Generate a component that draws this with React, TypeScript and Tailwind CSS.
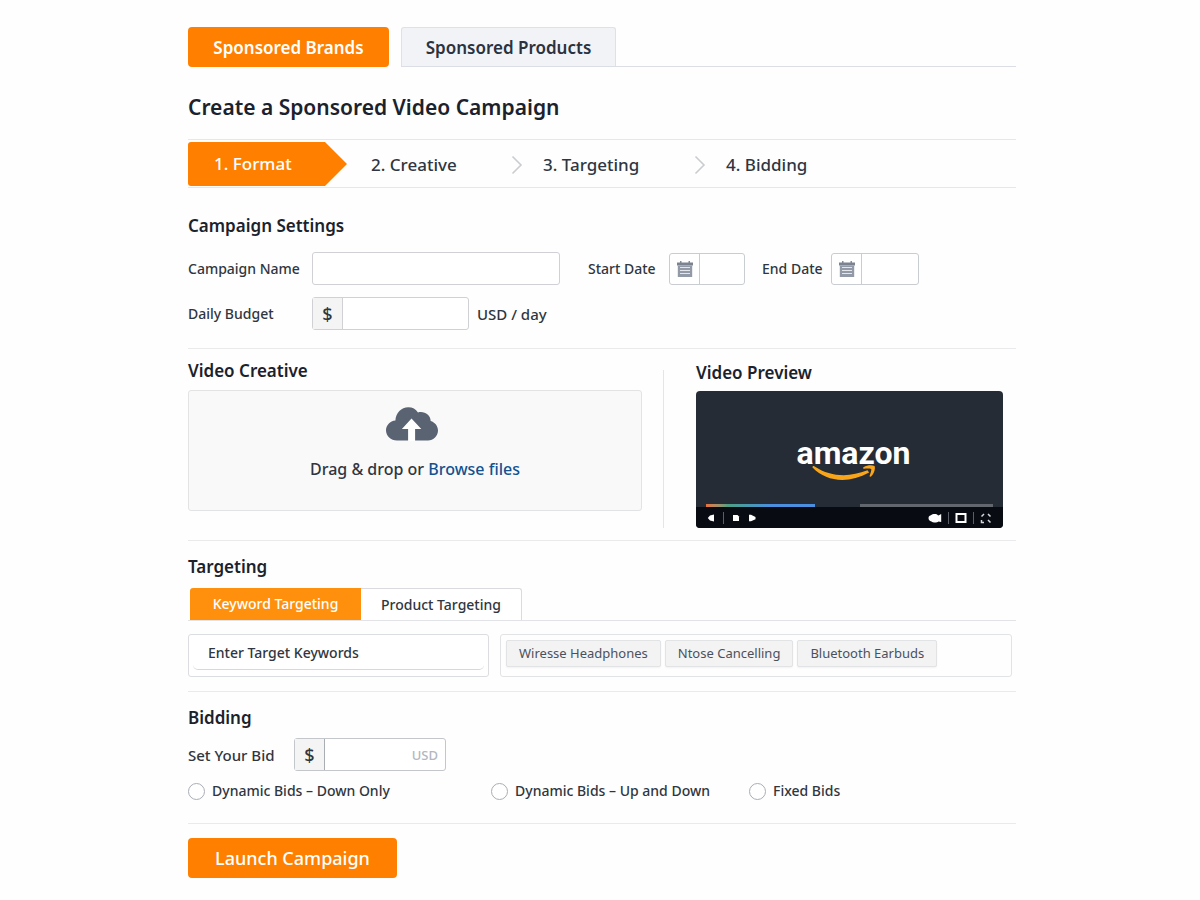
import { useState, type ReactNode } from 'react';

const keywords = ['Wiresse Headphones', 'Ntose Cancelling', 'Bluetooth Earbuds'];

const bidOptions = [
    { value: 'down', label: 'Dynamic Bids – Down Only', width: 'w-[303px]' },
    { value: 'up-down', label: 'Dynamic Bids – Up and Down', width: 'w-[258px]' },
    { value: 'fixed', label: 'Fixed Bids', width: 'w-auto' },
];

function SectionTitle({ children }: { children: ReactNode }) {
    return <h2 className="text-[17px] leading-6 font-semibold text-[#1b222c]">{children}</h2>;
}

function StepArrow() {
    return (
        <svg className="h-5 w-3 shrink-0" viewBox="0 0 12 20" fill="none" stroke="#c9ccd0" strokeWidth="1.6">
            <path d="M1.5 1.5 10 10l-8.5 8.5" />
        </svg>
    );
}

function CalendarIcon() {
    return (
        <svg className="h-4 w-4" viewBox="0 0 16 16">
            <path d="M3 0h1.5v2H3zM11.5 0H13v2h-1.500z" fill="#858c99" />
            <path d="M0 1.500h16v3H0z" fill="#7b8290" />
            <path d="M.8 4.500h14.400V16H.8z" fill="#929aa8" />
            <path d="M3 6.500h10M3 9.500h10M3 12.500h10" stroke="#e3e6eb" strokeWidth="1" />
        </svg>
    );
}

function CloudUpload() {
    return (
        <svg className="mr-[6px] h-[34px] w-[52px]" viewBox="0 0 52 34">
            <path
                d="M11 33.500C4.800 33.500 0 29 0 23.300c0-5 4-9.300 9.400-9.800C9.800 6 15.300.3 22.300.3c4.200 0 7.500 1.800 9.700 5.200 6.200-1.700 12.500 2.300 12.700 8.500 4.300 1.200 7.300 5.200 7.300 9.600 0 5.500-4.500 9.900-10 9.900z"
                fill="#5a6372"
            />
            <path d="M25.500 11.500 35.300 22h-6.200v12h-7V22h-6.200z" fill="#fff" />
        </svg>
    );
}

function DateField({ id, label, labelClass, inputClass }: { id: string; label: string; labelClass: string; inputClass: string }) {
    return (
        <div className="flex items-center">
            <label htmlFor={id} className={labelClass}>
                {label}
            </label>
            <div className="flex h-8 rounded-[3px] border border-[#c9ccd1] bg-white">
                <span className="flex w-[30px] items-center justify-center border-r border-[#c9ccd1]">
                    <CalendarIcon />
                </span>
                <input id={id} type="text" className={`min-w-0 bg-transparent px-1 outline-none ${inputClass}`} />
            </div>
        </div>
    );
}

function VideoPlayer() {
    return (
        <div className="flex h-[137px] flex-col overflow-hidden rounded-[4px] bg-[#262c35]">
            <div className="flex flex-1 flex-col items-center pt-11 pl-2">
                <span className="font-[Roboto,sans-serif] text-[32px] leading-9 font-bold text-white">amazon</span>
                <svg className="-mt-[6px] mr-5 h-4 w-16" viewBox="0 0 64 16">
                    <path d="M.5 2.500C.3 1 1.500.6 2.600 1.400 19 12 37 12.500 55.500 5.300l1.600 2.200C37 18.500 15 17.500.5 2.500z" fill="#f9a51a" />
                    <path d="M51.500 2.200C55 .2 59.500-.1 62.600.9c1 3.200-.6 8-3.600 10.500-1 .7-1.700.2-1.300-.8.8-2 1.900-5 1.500-6.500-1.500-.8-4.700-.7-7-.4-1.300.1-1.600-.9-.7-1.500z" fill="#f9a51a" />
                </svg>
            </div>
            <div className="flex justify-between px-[10px]">
                <span className="h-[3px] w-[109px] bg-linear-to-r from-[#e8703a] via-[#4d9f83] via-20% to-[#4a8fe0] to-60%" />
                <span className="h-[3px] w-[133px] bg-[#62666d]" />
            </div>
            <div className="flex h-[21px] items-center justify-between bg-[#080c12] px-[11px]">
                <div className="flex items-center">
                    <button type="button" aria-label="Previous">
                        <svg className="h-3 w-2" viewBox="0 0 8 12">
                            <path d="M7 2.500v7L3 8.500.8 6 3 3.500z" fill="#fff" />
                        </svg>
                    </button>
                    <span className="ml-2 h-3 w-px bg-[#5c6066]" />
                    <button type="button" aria-label="Stop" className="ml-2">
                        <svg className="h-3 w-2" viewBox="0 0 8 12">
                            <path d="M1 3h4.500L7 4.500V9H1z" fill="#fff" />
                        </svg>
                    </button>
                    <button type="button" aria-label="Play" className="ml-2">
                        <svg className="h-3 w-2" viewBox="0 0 8 12">
                            <path d="M1 2.800h2L7.500 5v2.200L3 9.200H1z" fill="#fff" />
                        </svg>
                    </button>
                </div>
                <div className="flex items-center gap-[6px]">
                    <button type="button" aria-label="Camera">
                        <svg className="h-3 w-[14px]" viewBox="0 0 14 12">
                            <path d="M.5 6C.5 4 2 3.500 3 3.200 4 1.800 9 1.500 9.500 3l1 .5L13.200 2v8L10.500 9.500C9 10.800 5 10.800 3.500 9.500 1.500 9 .5 8 .5 6z" fill="#fff" />
                        </svg>
                    </button>
                    <span className="h-3 w-px bg-[#5c6066]" />
                    <button type="button" aria-label="Theater mode">
                        <svg className="h-3 w-3" viewBox="0 0 12 12" fill="none" stroke="#fff" strokeWidth="2">
                            <path d="M1.500 2h9v8h-9z" />
                        </svg>
                    </button>
                    <span className="h-3 w-px bg-[#5c6066]" />
                    <button type="button" aria-label="Full screen">
                        <svg className="h-3 w-3" viewBox="0 0 12 12" fill="none" stroke="#d5d7da" strokeWidth="1.5">
                            <path d="M1.500 4.500 4 2M8 2l2.500 2.500M1.500 8v2.500H4M8 8l2.500 2.500" />
                        </svg>
                    </button>
                </div>
            </div>
        </div>
    );
}

export default function App() {
    const [bidding, setBidding] = useState('');
    const [targetKeywords, setTargetKeywords] = useState('');

    return (
        <div className="min-h-screen bg-[#fefefe] font-['Noto_Sans',sans-serif] text-[14px] leading-5 font-medium text-[#303640]">
            <main className="mx-auto max-w-[832px] pt-[27px] pb-5 pl-1">
                {/* Campaign type tabs */}
                <nav className="flex text-[17px] font-semibold">
                    <button type="button" className="h-10 w-[201px] rounded-[4px] bg-[#ff8000] pt-[2px] text-white">
                        Sponsored Brands
                    </button>
                    <div className="ml-3 flex flex-1 border-b border-[#dcdee5]">
                        <button
                            type="button"
                            className="w-[215px] rounded-t-[3px] border border-b-0 border-[#dfe1e8] bg-[#f1f3f7] pt-[2px] text-[#2b323e]"
                        >
                            Sponsored Products
                        </button>
                    </div>
                </nav>

                <h1 className="mt-6 text-[21px] leading-8 font-semibold text-[#1b222c]">Create a Sponsored Video Campaign</h1>

                {/* Wizard steps */}
                <ol className="mt-4 flex h-[49px] items-center border-y border-[#e6e7ea] text-[17px]">
                    <li className="relative flex h-11 w-[159px] items-center pl-[26px] text-white">
                        <svg className="absolute inset-0 h-11 w-[159px]" viewBox="0 0 159 44">
                            <path d="M3 0h134l22 22-22 22H3a3 3 0 0 1-3-3V3a3 3 0 0 1 3-3z" fill="#ff8000" />
                        </svg>
                        <span className="relative">1. Format</span>
                    </li>
                    <li className="w-[164px] pt-[2px] pl-6">2. Creative</li>
                    <li className="flex w-[183px] items-center gap-5 pt-[2px]">
                        <StepArrow />
                        3. Targeting
                    </li>
                    <li className="flex items-center gap-5 pt-[2px]">
                        <StepArrow />
                        4. Bidding
                    </li>
                </ol>

                {/* Campaign settings */}
                <section className="border-b border-[#e9eaec] pt-[26px] pb-[18px]">
                    <SectionTitle>Campaign Settings</SectionTitle>
                    <div className="mt-[14px] flex items-center">
                        <label htmlFor="campaign-name" className="w-[124px]">
                            Campaign Name
                        </label>
                        <input
                            id="campaign-name"
                            type="text"
                            className="h-[33px] w-[248px] rounded-[3px] border border-[#cfd1d5] bg-white px-2 outline-none"
                        />
                        <div className="ml-7 flex gap-[17px]">
                            <DateField id="start-date" label="Start Date" labelClass="w-[81px]" inputClass="w-11" />
                            <DateField id="end-date" label="End Date" labelClass="w-[69px]" inputClass="w-14" />
                        </div>
                    </div>
                    <div className="mt-3 flex items-center">
                        <label htmlFor="daily-budget" className="w-[124px]">
                            Daily Budget
                        </label>
                        <div className="flex h-[33px] w-[157px] rounded-[3px] border border-[#cfd1d5] bg-white">
                            <span className="flex w-[30px] shrink-0 items-center justify-center border-r border-[#cfd1d5] bg-[#f4f4f5] text-[18px]">
                                $
                            </span>
                            <input id="daily-budget" type="text" className="min-w-0 flex-1 bg-transparent px-2 outline-none" />
                        </div>
                        <span className="ml-2 text-[15px]">USD / day</span>
                    </div>
                </section>

                {/* Creative + preview */}
                <section className="flex border-b border-[#e9eaec] pb-3">
                    <div className="flex-1 pt-[10px]">
                        <SectionTitle>Video Creative</SectionTitle>
                        <div className="mt-[7px] flex h-[121px] flex-col items-center rounded-[3px] border border-[#e2e3e5] bg-[#f9f9fa] pt-4">
                            <CloudUpload />
                            <p className="mt-4 text-[16px] leading-6">
                                Drag &amp; drop or{' '}
                                <a href="#browse" className="text-[#13518f]">
                                    Browse files
                                </a>
                            </p>
                        </div>
                    </div>
                    <div className="mt-[21px] ml-[21px] w-px bg-[#e4e5e8]" />
                    <div className="mr-[13px] ml-8 w-[307px] pt-3">
                        <SectionTitle>Video Preview</SectionTitle>
                        <div className="mt-[6px]">
                            <VideoPlayer />
                        </div>
                    </div>
                </section>

                {/* Targeting */}
                <section className="border-b border-[#e9eaec] pt-[14px] pb-[14px]">
                    <SectionTitle>Targeting</SectionTitle>
                    <div className="mt-[9px] flex h-[33px] border-b border-[#e2e3e6] pl-[2px]">
                        <button type="button" className="w-[171px] rounded-tl-[3px] bg-[#ff900d] text-white">
                            Keyword Targeting
                        </button>
                        <button type="button" className="w-[161px] rounded-tr-[3px] border border-b-0 border-l-0 border-[#d9dbdf] bg-white">
                            Product Targeting
                        </button>
                    </div>
                    <div className="mt-[13px] mr-1 flex gap-[11px]">
                        <div className="h-[43px] w-[301px] rounded-[3px] border border-[#dcdde0] bg-white px-1">
                            <input
                                type="text"
                                aria-label="Enter Target Keywords"
                                placeholder="Enter Target Keywords"
                                value={targetKeywords}
                                onChange={(e) => setTargetKeywords(e.target.value)}
                                className="h-[35px] w-full rounded-b-[5px] border-b border-[#d6d8dc] px-[15px] outline-none placeholder:text-[#303640]"
                            />
                        </div>
                        <ul className="flex h-[43px] flex-1 items-center gap-1 rounded-[3px] border border-[#e2e3e5] px-[5px] pb-1 text-[13px] font-normal text-[#4b515c]">
                            {keywords.map((keyword) => (
                                <li key={keyword} className="h-[27px] rounded-[2px] border border-[#e2e3e5] bg-[#f3f3f4] px-3 leading-6 shadow-xs">
                                    {keyword}
                                </li>
                            ))}
                        </ul>
                    </div>
                </section>

                {/* Bidding */}
                <section className="border-b border-[#e9eaec] pt-[14px] pb-[22px]">
                    <SectionTitle>Bidding</SectionTitle>
                    <div className="mt-2 flex items-center">
                        <label htmlFor="bid" className="w-[106px] text-[15px]">
                            Set Your Bid
                        </label>
                        <div className="flex h-[33px] w-[152px] items-center rounded-[3px] border border-[#c3c6cb] bg-white">
                            <span className="flex h-full w-[30px] shrink-0 items-center justify-center border-r border-[#a9adb4] bg-[#f4f4f5] text-[18px]">
                                $
                            </span>
                            <input id="bid" type="text" className="min-w-0 flex-1 bg-transparent px-2 outline-none" />
                            <span className="pr-[7px] text-[13px] text-[#b3b7c0]">USD</span>
                        </div>
                    </div>
                    <div className="mt-[10px] flex">
                        {bidOptions.map((option) => (
                            <label key={option.value} className={`flex items-center gap-[7px] ${option.width}`}>
                                <input
                                    type="radio"
                                    name="bidding"
                                    checked={bidding === option.value}
                                    onChange={() => setBidding(option.value)}
                                    className="h-[17px] w-[17px] appearance-none rounded-full border border-[#a9adb4] bg-white checked:border-[5px] checked:border-[#ff8000]"
                                />
                                {option.label}
                            </label>
                        ))}
                    </div>
                </section>

                <button type="button" className="mt-[14px] h-10 w-[209px] rounded-[4px] bg-[#ff8000] text-[18px] text-white">
                    Launch Campaign
                </button>
            </main>
        </div>
    );
}
